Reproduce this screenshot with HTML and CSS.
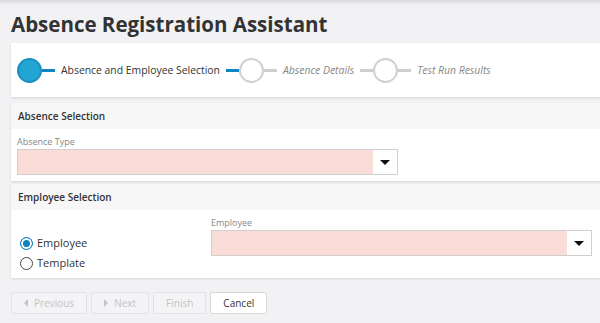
FILE: index.html
```html
<!DOCTYPE html>
<html lang="en">

<head>
    <meta charset="UTF-8">
    <meta name="viewport" content="width=device-width, initial-scale=1.0">
    <title>Absence Registration Assistant</title>
    <link rel="stylesheet" href="styles.css">
</head>

<body>
    <div id="root">
        <h1>Absence Registration Assistant</h1>

        <div class="stepper">
            <span class="circle active"></span>
            <span class="line active"></span>
            <span class="step-label current">Absence and Employee Selection</span>
            <span class="line active"></span>
            <span class="circle"></span>
            <span class="line"></span>
            <span class="step-label">Absence Details</span>
            <span class="line"></span>
            <span class="circle"></span>
            <span class="line"></span>
            <span class="step-label">Test Run Results</span>
        </div>

        <div class="panel first">
            <div class="panel-header">Absence Selection</div>
            <div class="panel-body">
                <div class="field">
                    <label>Absence Type</label>
                    <div class="select">
                        <div class="select-value"></div>
                        <div class="select-arrow"></div>
                    </div>
                </div>
            </div>
        </div>

        <div class="panel">
            <div class="panel-header">Employee Selection</div>
            <div class="panel-body split">
                <div class="radios">
                    <label class="radio"><input type="radio" name="source" checked> Employee</label>
                    <label class="radio"><input type="radio" name="source"> Template</label>
                </div>
                <div class="field">
                    <label>Employee</label>
                    <div class="select">
                        <div class="select-value"></div>
                        <div class="select-arrow"></div>
                    </div>
                </div>
            </div>
        </div>

        <div class="buttons">
            <button disabled><span class="tri left"></span>Previous</button>
            <button disabled><span class="tri right"></span>Next</button>
            <button disabled>Finish</button>
            <button>Cancel</button>
        </div>
    </div>
</body>

</html>
```

FILE: styles.css
```css
* {
    margin: 0;
    padding: 0;
    box-sizing: border-box;
}

body {
    background-color: #f2f1f4;
    font-family: "Open Sans", "Noto Sans", sans-serif;
    color: #333;
    min-height: 100vh;
    box-shadow: inset 0 5px 4px -3px rgba(0, 0, 0, 0.12);
    overflow: hidden;
}

#root {
    padding: 9px 0 0 11px;
    width: 610px;
}

h1 {
    font-size: 20.5px;
    font-weight: 700;
    color: #333;
    line-height: 30px;
    margin-bottom: 4px;
}

.stepper {
    display: flex;
    align-items: center;
    height: 54px;
    padding-left: 6px;
    background-color: #fff;
    box-shadow: 0 1px 2px rgba(0, 0, 0, 0.12);
}

.circle {
    width: 25px;
    height: 25px;
    border-radius: 50%;
    border: 2px solid #d0d0d0;
    background-color: #fff;
    flex-shrink: 0;
}

.circle.active {
    background-color: #22a5d3;
    border-color: #1b8fc2;
}

.line {
    width: 13px;
    height: 3px;
    background-color: #cfcfcf;
}

.line.active {
    background-color: #0f84c3;
}

.step-label {
    font-size: 10.4px;
    font-style: italic;
    color: #888;
    margin: 0 6px;
}

.step-label.current {
    font-style: normal;
    color: #333;
}

.panel {
    margin-top: 3px;
    background-color: #fff;
    box-shadow: 0 1px 2px rgba(0, 0, 0, 0.12);
}

.panel.first {
    margin-top: 6px;
}

.panel-header {
    background-color: #f7f7f7;
    height: 26px;
    line-height: 26px;
    padding-left: 7px;
    font-size: 10px;
    font-weight: 600;
    color: #333;
}

.panel-body {
    padding: 6px;
}

.panel-body.split {
    display: grid;
    grid-template-columns: 194px 381px;
    align-items: start;
    padding-bottom: 5px;
}

.field label {
    display: block;
    font-size: 9px;
    color: #888;
    line-height: 14px;
}

.select {
    display: flex;
    width: 381px;
    height: 26px;
    border: 1px solid #cfcfcf;
    background-color: #fff;
}

.select-value {
    flex: 1;
    background-color: #fadcd9;
}

.select-arrow {
    width: 24px;
    display: flex;
    align-items: center;
    justify-content: center;
}

.select-arrow::after {
    content: "";
    border-left: 5px solid transparent;
    border-right: 5px solid transparent;
    border-top: 5px solid #111;
}

.radios {
    padding: 17px 0 0 3px;
}

.radio {
    display: flex;
    align-items: center;
    font-size: 11px;
    color: #333;
    line-height: 20px;
}

.radio input {
    appearance: none;
    width: 13px;
    height: 13px;
    border-radius: 50%;
    border: 1px solid #444;
    margin-right: 4px;
    background-color: #fff;
}

.radio input:checked {
    border-color: #0f84c3;
    background-color: #0f84c3;
    box-shadow: inset 0 0 0 2px #fff;
}

.buttons {
    display: flex;
    gap: 4px;
    margin-top: 14px;
}

.buttons button {
    height: 22px;
    padding: 0 12px;
    font-family: inherit;
    font-size: 10px;
    color: #333;
    background-color: #fff;
    border: 1px solid #d9d9d9;
    border-radius: 2px;
    display: flex;
    align-items: center;
}

.buttons button:disabled {
    color: #c4c4c4;
    background-color: #f4f3f6;
    border-color: #e3e3e6;
}

.tri {
    width: 0;
    height: 0;
    border-top: 4px solid transparent;
    border-bottom: 4px solid transparent;
    margin-right: 6px;
}

.tri.left {
    border-right: 4px solid #c4c4c4;
}

.tri.right {
    border-left: 4px solid #c4c4c4;
}
```
